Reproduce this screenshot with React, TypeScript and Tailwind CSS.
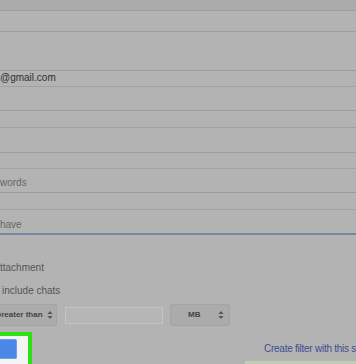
import React from "react";

function Arrows({ className }: { className?: string }) {
  return (
    <svg className={className} width="6" height="10" viewBox="0 0 6 10">
      <path d="M0.5 4 L3 1 L5.5 4 Z" fill="#555" />
      <path d="M0.5 6 L3 9 L5.5 6 Z" fill="#555" />
    </svg>
  );
}

export default function App() {
  return (
    <div className="w-[356px] h-[364px] overflow-hidden bg-[#b3b3b3] flex flex-col font-['Liberation_Sans',Arial,sans-serif]">
      <div className="h-[11px] shrink-0 bg-[#ababab] border-b border-[#9c9c9c]" />
      <div className="h-[21px] shrink-0 border-b border-[#9e9e9e]" />
      <div className="h-[39px] shrink-0 border-b border-[#9c9c9c]" />
      <div className="h-[16px] shrink-0 border-b border-[#a2a2a2] flex items-center">
        <span className="text-[10px] leading-[12px] text-[#2f2f2f] -mt-[1px]">@gmail.com</span>
      </div>
      <div className="h-[24px] shrink-0 border-b border-[#9e9e9e]" />
      <div className="h-[17px] shrink-0 border-b border-[#a0a0a0]" />
      <div className="h-[25px] shrink-0 border-b border-[#9e9e9e]" />
      <div className="h-[16px] shrink-0 border-b border-[#a2a2a2]" />
      <div className="h-[24px] shrink-0 border-b border-[#9c9c9c] flex items-end">
        <span className="text-[10px] leading-[12px] text-[#666] mb-[3px]">words</span>
      </div>
      <div className="h-[17px] shrink-0 border-b border-[#a2a2a2]" />
      <div className="h-[25px] shrink-0 border-b-2 border-[#77879f] flex items-end">
        <span className="text-[10px] leading-[12px] text-[#666] mb-[2px]">have</span>
      </div>

      <div className="mt-[27px] text-[10px] leading-[12px] text-[#555]">ttachment</div>
      <div className="mt-[11px] pl-[2px] text-[10px] leading-[12px] text-[#555]">include chats</div>

      <div className="mt-[7px] h-[22px] flex items-center">
        <div className="-ml-[14px] shrink-0 w-[71px] h-[22px] bg-[#ababab] border border-[#a3a3a3] rounded-[2px] flex items-center pl-[8px] pr-[3px] justify-between">
          <span className="text-[8px] font-bold text-[#444] leading-[10px]">Greater than</span>
          <Arrows />
        </div>
        <div className="ml-[8px] shrink-0 w-[98px] h-[17px] border border-[#c4c4c4] bg-[#b6b6b6]" />
        <div className="ml-[7px] shrink-0 w-[60px] h-[22px] bg-[#ababab] border border-[#a3a3a3] rounded-[2px] flex items-center pl-[17px] pr-[5px] justify-between">
          <span className="text-[8px] font-bold text-[#444] leading-[10px]">MB</span>
          <Arrows />
        </div>
      </div>

      <div className="mt-[6px] flex flex-1 min-h-0">
        <div className="shrink-0 w-[32px] h-[40px] border-4 border-l-0 border-[#2fe014] bg-[#f4f4f4] pt-[3px]">
          <div className="w-[17px] h-[20px] bg-[#4a87e6] border border-[#6a9ee8] border-l-0 rounded-r-[2px]" />
        </div>
        <div className="flex-1 min-w-0 flex flex-col overflow-hidden">
          <div className="mt-[11px] pl-[232px] text-[10px] leading-[12px] tracking-[-0.25px] text-[#3d4e8e] whitespace-nowrap">
            Create filter with this search
          </div>
          <div className="mt-auto ml-[213px] h-[3px] bg-[#bfcbb4]" />
        </div>
      </div>
    </div>
  );
}
